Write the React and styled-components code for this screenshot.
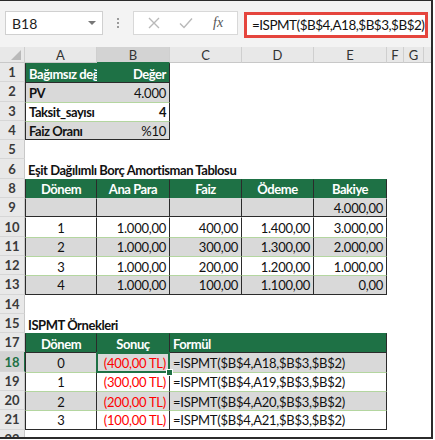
import styled, { createGlobalStyle } from "styled-components";

const GREEN = "#1e7145";
const DARK = "#2b2b2b";
const ZEBRA = "#d9d9d9";
const LINE = "#b4d6a0";
const RED = "#ff0000";

const Global = createGlobalStyle`
  body {
    margin: 0;
    background: #ffffff;
  }
`;

const Frame = styled.div`
  width: 433px;
  height: 439px;
  box-sizing: border-box;
  border-top: 1px solid ${DARK};
  border-right: 2px solid ${DARK};
  border-bottom: 2px solid ${DARK};
  overflow: hidden;
  background: #fff;
  font-family: Lato, "Liberation Sans", sans-serif;
`;

const FormulaBar = styled.div`
  height: 46px;
  background: #f3f3f3;
  display: flex;
  align-items: flex-start;
  padding: 10px 0 0 5px;
  box-sizing: border-box;
`;

const NameBox = styled.div`
  width: 98px;
  height: 24px;
  box-sizing: border-box;
  background: #fff;
  border: 1px solid #d0d0d0;
  display: flex;
  align-items: center;
  justify-content: space-between;
  padding: 0 6px 0 6px;
  font-size: 14px;
  color: #222;
`;

const Caret = styled.span`
  width: 0;
  height: 0;
  border-left: 4px solid transparent;
  border-right: 4px solid transparent;
  border-top: 4px solid #777;
`;

const Dots = styled.div`
  width: 30px;
  height: 24px;
  display: flex;
  flex-direction: column;
  align-items: center;
  justify-content: center;
  gap: 2px;
  span {
    width: 2px;
    height: 2px;
    background: #9a9a9a;
  }
`;

const ButtonBox = styled.div`
  width: 105px;
  height: 24px;
  box-sizing: border-box;
  background: #fff;
  border: 1px solid #d8d8d8;
  display: flex;
  align-items: center;
  justify-content: space-around;
  padding: 0 4px;
  color: #bdbdbd;
`;

const Fx = styled.span`
  font-family: "Liberation Serif", serif;
  font-style: italic;
  font-size: 14px;
  color: #555;
`;

const FormulaBox = styled.div`
  margin-left: 6px;
  margin-top: 1px;
  width: 184px;
  height: 26px;
  box-sizing: border-box;
  border: 3px solid #e5453d;
  background: #fff;
  display: flex;
  align-items: center;
  padding-left: 5px;
  font-size: 13.5px;
  letter-spacing: -0.5px;
  color: #111;
  white-space: nowrap;
`;

const HeaderRow = styled.div`
  display: flex;
  height: 16px;
  background: #e8e8e8;
`;

const ColHead = styled.div`
  width: ${(p) => p.$w}px;
  flex: none;
  box-sizing: border-box;
  height: 16px;
  display: flex;
  align-items: center;
  justify-content: center;
  font-size: 13px;
  color: #333;
  background: ${(p) => (p.$active ? "#d3d3d3" : "#e8e8e8")};
  border-right: 1px solid #cfcfcf;
  border-bottom: 1px solid ${(p) => (p.$active ? GREEN : "#c8c8c8")};
`;

const Corner = styled.div`
  width: 25px;
  flex: none;
  height: 16px;
  box-sizing: border-box;
  border-right: 1px solid #cfcfcf;
  border-bottom: 1px solid #c8c8c8;
  display: flex;
  align-items: flex-end;
  justify-content: flex-end;
  padding: 0 3px 2px 0;
  span {
    width: 0;
    height: 0;
    border-left: 10px solid transparent;
    border-bottom: 10px solid #b9b9b9;
  }
`;

const Row = styled.div`
  display: flex;
  height: 19.3px;
`;

const RowHead = styled.div`
  width: 25px;
  flex: none;
  box-sizing: border-box;
  background: ${(p) => (p.$active ? "#d3d3d3" : "#e8e8e8")};
  border-right: 1px solid ${(p) => (p.$active ? GREEN : "#c8c8c8")};
  border-bottom: 1px solid #d6d6d6;
  display: flex;
  align-items: center;
  justify-content: center;
  font-size: 13px;
  font-weight: 700;
  color: ${(p) => (p.$active ? GREEN : "#3a3a3a")};
`;

const Cell = styled.div`
  position: relative;
  width: ${(p) => p.$w}px;
  flex: none;
  box-sizing: border-box;
  background: ${(p) => p.$bg || "transparent"};
  border-top: 1px solid ${(p) => p.$top || "transparent"};
  border-left: ${(p) => (p.$left ? `1px solid ${DARK}` : "none")};
  border-right: ${(p) => (p.$right ? `1px solid ${DARK}` : "none")};
  border-bottom: ${(p) => (p.$bottom ? `1px solid ${DARK}` : "none")};
  display: flex;
  align-items: center;
  justify-content: ${(p) =>
    p.$align === "right" ? "flex-end" : p.$align === "center" ? "center" : "flex-start"};
  padding: 1px 3px 0 3px;
  font-size: 13px;
  font-weight: ${(p) => (p.$bold ? 700 : 400)};
  letter-spacing: ${(p) => (p.$bold ? "-0.45px" : "-0.25px")};
  color: ${(p) => p.$color || "#111"};
  white-space: nowrap;
  overflow: ${(p) => (p.$spill ? "visible" : "hidden")};
  z-index: ${(p) => (p.$spill ? 1 : 0)};
`;

const Selection = styled.div`
  position: absolute;
  left: -1px;
  top: -1px;
  right: -1px;
  bottom: -1px;
  border: 2px solid ${GREEN};
  pointer-events: none;
  &::after {
    content: "";
    position: absolute;
    right: -5px;
    bottom: -5px;
    width: 5px;
    height: 5px;
    background: ${GREEN};
    border: 1px solid #fff;
  }
`;

const W = { A: 72, B: 73, C: 72, D: 72, E: 73, F: 17, G: 20, H: 10 };

function Blank({ n }) {
  return (
    <Row>
      <RowHead>{n}</RowHead>
    </Row>
  );
}

function Title({ n, children }) {
  return (
    <Row>
      <RowHead>{n}</RowHead>
      <Cell $w={300} $bold $spill>{children}</Cell>
    </Row>
  );
}

const inputs = [
  { n: 2, label: "PV", value: "4.000", bg: ZEBRA },
  { n: 3, label: "Taksit_sayısı", value: "4", bg: "#fff", boldValue: true },
  { n: 4, label: "Faiz Oranı", value: "%10", bg: ZEBRA, last: true },
];

const amort = [
  { n: 10, d: "1", a: "1.000,00", f: "400,00", o: "1.400,00", b: "3.000,00" },
  { n: 11, d: "2", a: "1.000,00", f: "300,00", o: "1.300,00", b: "2.000,00" },
  { n: 12, d: "3", a: "1.000,00", f: "200,00", o: "1.200,00", b: "1.000,00" },
  { n: 13, d: "4", a: "1.000,00", f: "100,00", o: "1.100,00", b: "0,00" },
];

const examples = [
  { n: 18, d: "0", r: "(400,00 TL)" },
  { n: 19, d: "1", r: "(300,00 TL)" },
  { n: 20, d: "2", r: "(200,00 TL)" },
  { n: 21, d: "3", r: "(100,00 TL)" },
];

export default function App() {
  return (
    <Frame>
      <Global />
      <FormulaBar>
        <NameBox>
          B18
          <Caret />
        </NameBox>
        <Dots>
          <span />
          <span />
          <span />
        </Dots>
        <ButtonBox>
          <svg width="12" height="12" viewBox="0 0 12 12">
            <path d="M1 1 L11 11 M11 1 L1 11" stroke="#b9b9b9" strokeWidth="1.4" />
          </svg>
          <svg width="14" height="12" viewBox="0 0 14 12">
            <path d="M1 6.5 L5 10.5 L13 1.5" stroke="#b9b9b9" strokeWidth="1.4" fill="none" />
          </svg>
          <Fx>fx</Fx>
        </ButtonBox>
        <FormulaBox>=ISPMT($B$4,A18,$B$3,$B$2)</FormulaBox>
      </FormulaBar>

      <HeaderRow>
        <Corner>
          <span />
        </Corner>
        <ColHead $w={W.A}>A</ColHead>
        <ColHead $w={W.B} $active>B</ColHead>
        <ColHead $w={W.C}>C</ColHead>
        <ColHead $w={W.D}>D</ColHead>
        <ColHead $w={W.E}>E</ColHead>
        <ColHead $w={W.F}>F</ColHead>
        <ColHead $w={W.G}>G</ColHead>
        <ColHead $w={W.H} />
      </HeaderRow>

      <Row>
        <RowHead>1</RowHead>
        <Cell $w={W.A} $bg={GREEN} $color="#fff" $bold $left>Bağımsız değişken</Cell>
        <Cell $w={W.B} $bg={GREEN} $color="#fff" $bold $align="right" $right>Değer</Cell>
      </Row>
      {inputs.map((r, i) => (
        <Row key={r.n}>
          <RowHead>{r.n}</RowHead>
          <Cell $w={W.A} $bg={r.bg} $bold $left $bottom={r.last} $top={i === 0 ? DARK : LINE}>
            {r.label}
          </Cell>
          <Cell
            $w={W.B}
            $bg={r.bg}
            $bold={r.boldValue}
            $align="right"
            $right
            $bottom={r.last}
            $top={i === 0 ? DARK : LINE}
          >
            {r.value}
          </Cell>
        </Row>
      ))}
      <Blank n={5} />
      <Title n={6}>Eşit Dağılımlı Borç Amortisman Tablosu</Title>

      <Row>
        <RowHead>8</RowHead>
        {["Dönem", "Ana Para", "Faiz", "Ödeme", "Bakiye"].map((h, i) => (
          <Cell
            key={h}
            $w={[W.A, W.B, W.C, W.D, W.E][i]}
            $bg={GREEN}
            $color="#fff"
            $bold
            $align="center"
            $left={i === 0}
            $right
          >
            {h}
          </Cell>
        ))}
      </Row>
      <Row>
        <RowHead>9</RowHead>
        <Cell $w={W.A} $bg={ZEBRA} $left $right $bottom />
        <Cell $w={W.B} $bg={ZEBRA} $right $bottom />
        <Cell $w={W.C} $bg={ZEBRA} $right $bottom />
        <Cell $w={W.D} $bg={ZEBRA} $right $bottom />
        <Cell $w={W.E} $bg={ZEBRA} $right $bottom $align="right">4.000,00</Cell>
      </Row>
      {amort.map((r, i) => {
        const bg = i % 2 === 0 ? "#fff" : ZEBRA;
        const top = i === 0 ? "transparent" : LINE;
        const last = i === amort.length - 1;
        return (
          <Row key={r.n}>
            <RowHead>{r.n}</RowHead>
            <Cell $w={W.A} $bg={bg} $top={top} $left $right $bottom={last} $align="center">{r.d}</Cell>
            <Cell $w={W.B} $bg={bg} $top={top} $right $bottom={last} $align="right">{r.a}</Cell>
            <Cell $w={W.C} $bg={bg} $top={top} $right $bottom={last} $align="right">{r.f}</Cell>
            <Cell $w={W.D} $bg={bg} $top={top} $right $bottom={last} $align="right">{r.o}</Cell>
            <Cell $w={W.E} $bg={bg} $top={top} $right $bottom={last} $align="right">{r.b}</Cell>
          </Row>
        );
      })}
      <Blank n={14} />
      <Title n={15}>ISPMT Örnekleri</Title>

      <Row>
        <RowHead>17</RowHead>
        <Cell $w={W.A} $bg={GREEN} $color="#fff" $bold $align="center" $left $right>Dönem</Cell>
        <Cell $w={W.B} $bg={GREEN} $color="#fff" $bold $align="center" $right>Sonuç</Cell>
        <Cell $w={W.C + W.D + W.E} $bg={GREEN} $color="#fff" $bold $right>Formül</Cell>
      </Row>
      {examples.map((r, i) => {
        const bg = i % 2 === 0 ? ZEBRA : "#fff";
        const top = i === 0 ? DARK : LINE;
        const last = i === examples.length - 1;
        return (
          <Row key={r.n}>
            <RowHead $active={i === 0}>{r.n}</RowHead>
            <Cell $w={W.A} $bg={bg} $top={top} $left $right $bottom={last} $align="center">{r.d}</Cell>
            <Cell
              $w={W.B}
              $bg={bg}
              $top={top}
              $right
              $bottom={last}
              $align="right"
              $color={RED}
              $spill={i === 0}
            >
              {r.r}
              {i === 0 && <Selection />}
            </Cell>
            <Cell $w={W.C + W.D + W.E} $bg={bg} $top={top} $right $bottom={last}>
              {`=ISPMT($B$4,A${r.n},$B$3,$B$2)`}
            </Cell>
          </Row>
        );
      })}
      <Blank n={22} />
    </Frame>
  );
}
